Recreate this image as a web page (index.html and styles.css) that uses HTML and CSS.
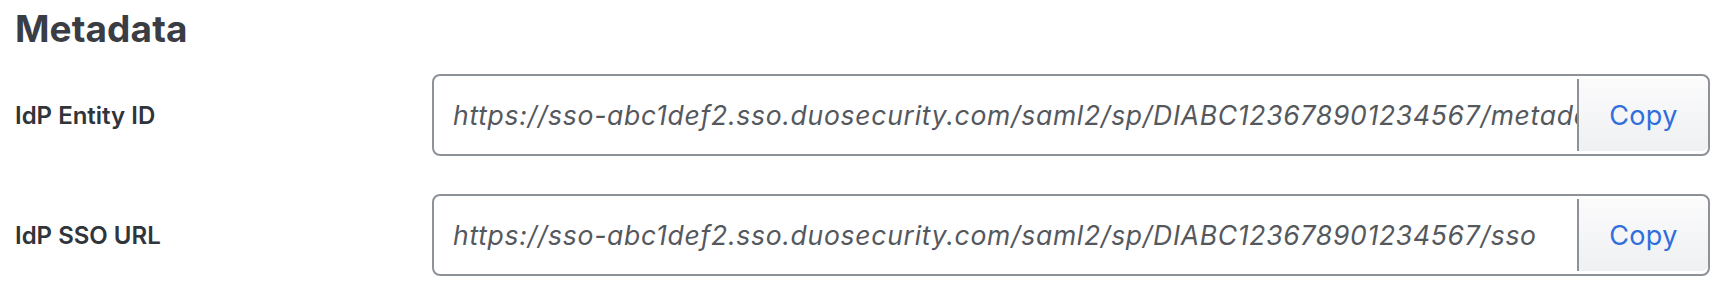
FILE: index.html
```html
<!DOCTYPE html>
<html lang="en">
<head>
<meta charset="utf-8">
<title>Metadata</title>
<link rel="stylesheet" href="styles.css">
</head>
<body>
<section class="metadata">
  <h2 class="title">Metadata</h2>
  <div class="row">
    <label class="label">IdP Entity ID</label>
    <div class="field">
      <input class="value" type="text" readonly value="https://sso-abc1def2.sso.duosecurity.com/saml2/sp/DIABC123678901234567/metadata">
      <button class="copy" type="button">Copy</button>
    </div>
  </div>
  <div class="row">
    <label class="label">IdP SSO URL</label>
    <div class="field">
      <input class="value" type="text" readonly value="https://sso-abc1def2.sso.duosecurity.com/saml2/sp/DIABC123678901234567/sso">
      <button class="copy" type="button">Copy</button>
    </div>
  </div>
</section>
</body>
</html>
```
FILE: styles.css
```css
html, body {
  margin: 0;
  padding: 0;
  background: #ffffff;
}

.metadata {
  padding: 7px 18px 0 15px;
  font-family: Inter, "Noto Sans", sans-serif;
}

.title {
  margin: 0 0 23px 0;
  font-size: 37px;
  line-height: 44px;
  font-weight: 700;
  color: #3a3d44;
  letter-spacing: 0.1px;
}

.row {
  display: grid;
  grid-template-columns: 417px 1fr;
  align-items: center;
  margin-bottom: 38px;
}

.row:last-child {
  margin-bottom: 0;
}

.label {
  font-size: 24px;
  font-weight: 600;
  color: #30343b;
}

.field {
  display: flex;
  height: 82px;
  box-sizing: border-box;
  border: 2px solid #8d9299;
  border-radius: 8px;
  background: #ffffff;
  overflow: hidden;
}

.value {
  flex: 1;
  min-width: 0;
  border: 0;
  outline: none;
  padding: 0 0 0 19px;
  margin: 0;
  background: transparent;
  font-family: Inter, "Noto Sans", sans-serif;
  font-style: italic;
  font-size: 26.5px;
  letter-spacing: 0.72px;
  color: #55585d;
}

.copy {
  width: 131px;
  margin: 3px 0;
  padding: 0;
  border: 0;
  border-left: 2px solid #8d9299;
  border-radius: 0 6px 6px 0;
  background: linear-gradient(#fbfbfc, #eff0f2);
  font-family: Inter, "Noto Sans", sans-serif;
  font-size: 27px;
  letter-spacing: 0.3px;
  color: #2f6edc;
  cursor: pointer;
}
```
